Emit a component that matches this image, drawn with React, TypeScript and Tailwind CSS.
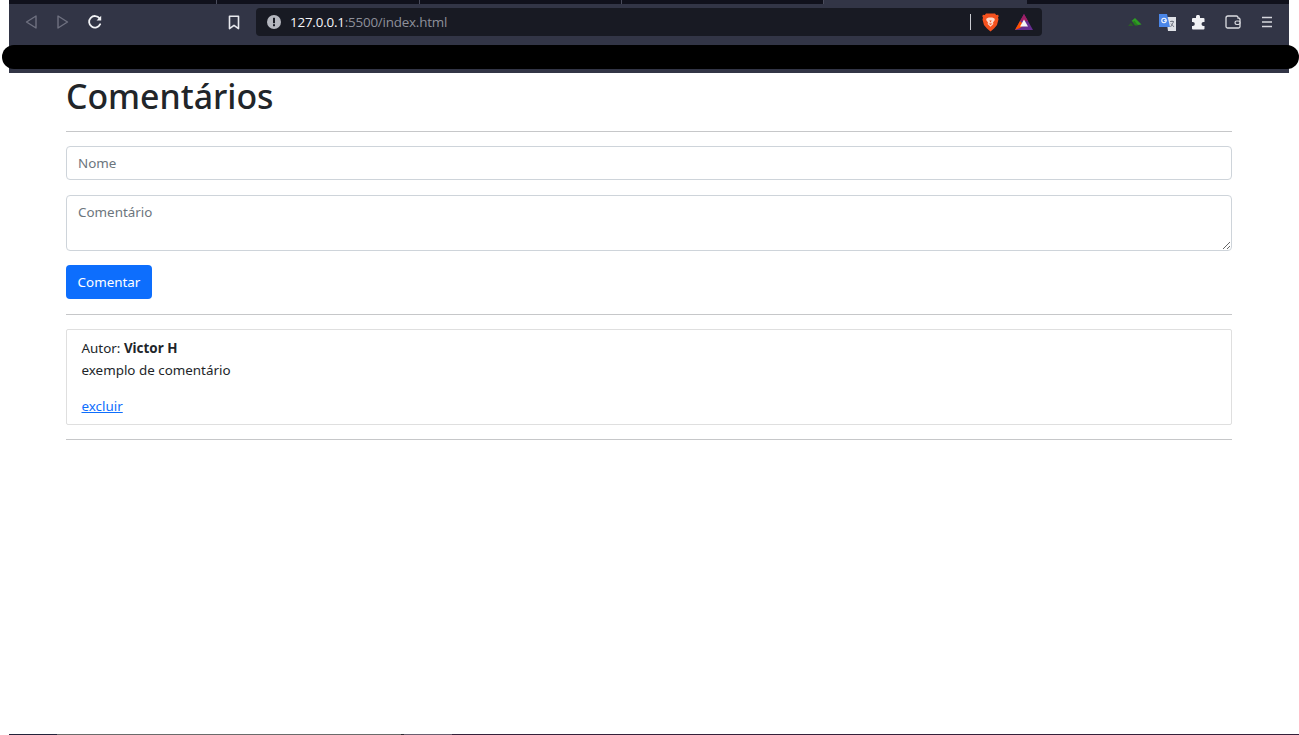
import { useState } from "react";

const TAB_WIDTHS = ["w-[208px]", "w-[203px]", "w-[202px]", "w-[202px]"];

function BackIcon({ flip, color }: { flip?: boolean; color: string }) {
  return (
    <svg width="14" height="16" viewBox="0 0 14 16" className={flip ? "rotate-180" : ""}>
      <path d="M12 2 L2.500 8 L12 14 Z" fill="none" stroke={color} strokeWidth="1.400" strokeLinejoin="round" />
    </svg>
  );
}

function ReloadIcon() {
  return (
    <svg width="16" height="16" viewBox="0 0 16 16">
      <path d="M13.200 10.200A5.800 5.800 0 1 1 12.600 4.400" fill="none" stroke="#f1f2f5" strokeWidth="1.800" strokeLinecap="round" />
      <path d="M14.200 1.800v4.600H9.600z" fill="#f1f2f5" />
    </svg>
  );
}

function BookmarkIcon() {
  return (
    <svg width="12" height="15" viewBox="0 0 12 15">
      <path d="M1.500 1.200h9v12.400L6 10.400l-4.500 3.200z" fill="none" stroke="#e8e9ee" strokeWidth="1.600" strokeLinejoin="round" />
    </svg>
  );
}

function AlertIcon() {
  return (
    <svg width="14" height="14" viewBox="0 0 14 14">
      <circle cx="7" cy="7" r="7" fill="#b5b7bf" />
      <rect x="6" y="2.800" width="2" height="5.400" fill="#181a23" />
      <rect x="6" y="9.200" width="2" height="2" fill="#181a23" />
    </svg>
  );
}

function BraveIcon() {
  return (
    <svg width="17" height="19" viewBox="0 0 17 19">
      <path d="M4 .5h9l1.200 1.400 1.900-.2.600 1.600-.7 1.200.5 1.800L15 12l-3 3.600-3.500 2.900L5 15.600 2 12 .5 6.500 1 4.700.3 3.300.9 1.700l1.900.2z" fill="#f4511e" />
      <path d="M4.500 5.500 6.800 4.500h3.400l2.300 1 .3 1.500-1.800 2.500.4 1.500-2.900 2.800-2.900-2.800.4-1.500L4.200 7z" fill="#fbd9cc" />
      <path d="M7.300 7.500h2.400L8.500 9.500zM6.500 10.500h4L8.500 12z" fill="#f4511e" />
    </svg>
  );
}

function BatIcon() {
  return (
    <svg width="18" height="16" viewBox="0 0 18 16">
      <path d="M9 0 18 16H0z" fill="#662d91" />
      <path d="M9 0 13 7H5z" fill="#9e1f63" />
      <path d="M0 16 5 7 9 11 5 14z" fill="#ff5000" />
      <path d="M9 5.500 13 12.500H5z" fill="#f4f4f6" />
    </svg>
  );
}

function LeafIcon() {
  return (
    <svg width="14" height="10" viewBox="0 0 14 10">
      <path d="M0 9 3 5.500 5.500 9z" fill="#2c5a2a" />
      <path d="M3.500 4 7 1 13.500 7.500 10 8z" fill="#2e9e23" />
      <path d="M7 8.500 4.500 5 6.500 3.800 10 8.500z" fill="#257f1d" />
    </svg>
  );
}

function TranslateIcon() {
  return (
    <svg width="17" height="17" viewBox="0 0 17 17">
      <path d="M7 3h10v14H9z" fill="#dfe1e6" />
      <path d="M11 7.500h4M13 6.500v1M11.500 13l3-5M12 9.500l3 3.500" stroke="#6f7480" strokeWidth="0.900" fill="none" />
      <path d="M0 0h8l3 13H0z" fill="#4a86e8" />
      <circle cx="5" cy="6.500" r="2.200" fill="none" stroke="#f5f7fb" strokeWidth="1.100" />
      <rect x="5" y="6.200" width="2.500" height="0.900" fill="#f5f7fb" />
    </svg>
  );
}

function PuzzleIcon() {
  return (
    <svg width="15" height="15" viewBox="0 0 15 15">
      <path d="M5 1.800a2 2 0 0 1 4 0V3h3.500a1 1 0 0 1 1 1v3h-1a2 2 0 0 0 0 4h1v2.500a1 1 0 0 1-1 1H2a1 1 0 0 1-1-1V11h.8a2 2 0 0 0 0-4H1V4a1 1 0 0 1 1-1h3z" fill="#f1f2f5" />
    </svg>
  );
}

function WalletIcon() {
  return (
    <svg width="16" height="14" viewBox="0 0 16 14">
      <path d="M13 3V2.500A1.500 1.500 0 0 0 11.500 1H3a2 2 0 0 0-2 2v8.500A1.500 1.500 0 0 0 2.500 13h11a1.500 1.500 0 0 0 1.500-1.500v-7A1.500 1.500 0 0 0 13.500 3z" fill="none" stroke="#dcdde2" strokeWidth="1.300" />
      <rect x="10" y="6" width="5" height="3.500" rx="1.700" fill="#323546" stroke="#dcdde2" strokeWidth="1.200" />
    </svg>
  );
}

function MenuIcon() {
  return (
    <svg width="12" height="12" viewBox="0 0 12 12">
      <path d="M1 1.500h10M1 6h10M1 10.500h10" stroke="#d6d7dd" strokeWidth="1.500" />
    </svg>
  );
}

function BrowserBar() {
  return (
    <div className="ml-[9px] h-[73px] w-[1280px] shrink-0 bg-[#323546]">
      <div className="flex h-[4px] bg-[#10111c]">
        {TAB_WIDTHS.map((w, i) => (
          <div key={i} className={`${w} h-full border-r border-[#4a4c5c]`} />
        ))}
        <div className="h-full w-[203px] bg-[#323546]" />
      </div>
      <div className="flex h-[36px] items-center">
        <div className="ml-[15px] flex items-center">
          <BackIcon color="#6f7180" />
          <div className="ml-[18px]">
            <BackIcon flip color="#6f7180" />
          </div>
          <div className="ml-[17px]">
            <ReloadIcon />
          </div>
        </div>
        <div className="ml-[125px]">
          <BookmarkIcon />
        </div>
        <div className="ml-[16px] flex h-[28px] w-[786px] items-center rounded-[4px] bg-[#181a23] pl-[11px]">
          <AlertIcon />
          <span className="ml-[9px] font-['Open_Sans',sans-serif] text-[13.400px] tracking-[-0.2px] text-[#8e909a]">
            <span className="text-[#f4f5f8]">127.0.0.1</span>:5500/index.html
          </span>
          <div className="ml-auto flex items-center pr-[9px]">
            <div className="h-[16px] w-px bg-[#c9cad0]" />
            <div className="ml-[11px] flex">
              <BraveIcon />
            </div>
            <div className="ml-[16px] flex">
              <BatIcon />
            </div>
          </div>
        </div>
        <div className="ml-[86px] flex items-center">
          <LeafIcon />
          <div className="ml-[17px] flex">
            <TranslateIcon />
          </div>
          <div className="ml-[15px] flex">
            <PuzzleIcon />
          </div>
          <div className="ml-[19px] flex">
            <WalletIcon />
          </div>
          <div className="ml-[20px] flex">
            <MenuIcon />
          </div>
        </div>
      </div>
    </div>
  );
}

function CommentCard() {
  return (
    <div className="mt-[14px] h-[96px] rounded-[2px] border border-[#dfdfdf] px-[14.500px] pt-[7px] text-[13.400px] leading-[22px] text-[#212529]">
      <p>
        Autor: <strong className="font-bold">Victor H</strong>
      </p>
      <p>exemplo de comentário</p>
      <a href="#" className="mt-[14px] block text-[#0d6efd] underline">
        excluir
      </a>
    </div>
  );
}

export default function App() {
  const [name, setName] = useState("");
  const [comment, setComment] = useState("");

  return (
    <div className="relative flex h-[735px] flex-col overflow-hidden bg-white font-['Noto_Sans',sans-serif]">
      <BrowserBar />
      {/* tarja preta por cima da barra de favoritos */}
      <div className="absolute left-[2px] top-[45px] h-[24px] w-[1297px] rounded-full bg-black" />

      <main className="ml-[66px] w-[1166px] flex-1">
        <h1 className="mt-[2px] text-[33.800px] leading-[43px] font-medium text-[#212529]">Comentários</h1>
        <hr className="mt-[13px] border-[#c6c7c9]" />
        <input
          className="mt-[14px] block h-[34px] w-full rounded-[4px] border border-[#ced4da] px-[11px] text-[13.400px] placeholder:text-[#6c757d]"
          placeholder="Nome"
          value={name}
          onChange={(e) => setName(e.target.value)}
        />
        <textarea
          className="mt-[15px] block h-[56px] w-full rounded-[4px] border border-[#ced4da] px-[11px] pt-[5px] text-[13.400px] leading-[22px] placeholder:text-[#6c757d]"
          placeholder="Comentário"
          value={comment}
          onChange={(e) => setComment(e.target.value)}
        />
        <button className="mt-[14px] block h-[34px] w-[86px] rounded-[4px] bg-[#0d6efd] text-[13.400px] text-white">
          Comentar
        </button>
        <hr className="mt-[15px] border-[#c6c7c9]" />
        <CommentCard />
        <hr className="mt-[14px] border-[#c6c7c9]" />
      </main>

      <div className="ml-[9px] flex h-px shrink-0">
        <div className="w-[48px] bg-[#23233a]" />
        <div className="w-[344px] bg-[#6b6b6b]" />
        <div className="w-[3px] bg-[#2a2a30]" />
        <div className="w-[48px] bg-[#6a5f70]" />
        <div className="flex-1 bg-[#35213a]" />
      </div>
    </div>
  );
}
